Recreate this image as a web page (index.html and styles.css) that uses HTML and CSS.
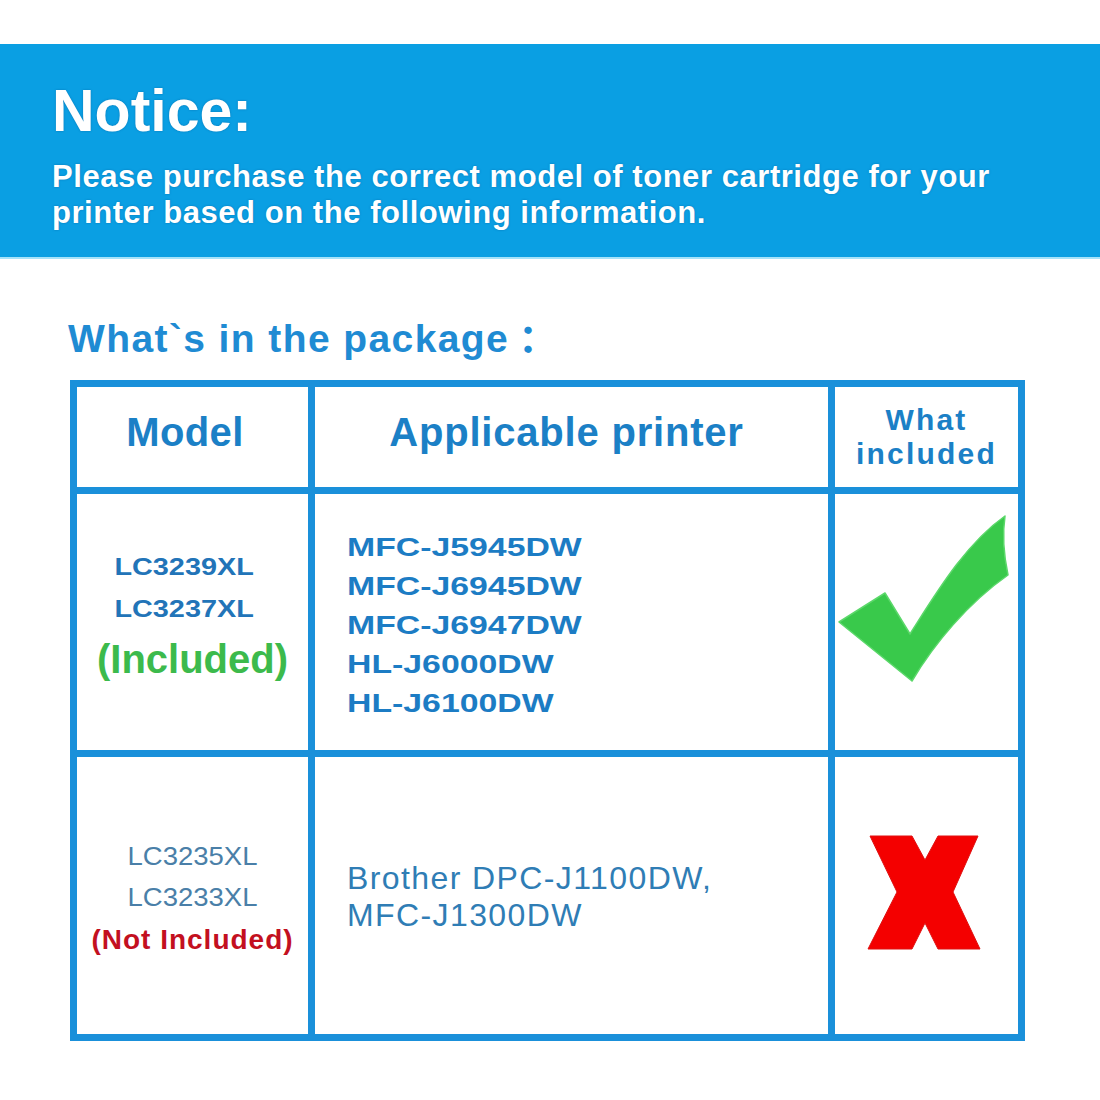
FILE: index.html
```html
<!DOCTYPE html>
<html lang="en">
<head>
<meta charset="utf-8">
<title>Notice - What's in the package</title>
<link rel="stylesheet" href="styles.css">
</head>
<body>
<div class="page">
  <section class="notice">
    <h1 class="notice-title">Notice:</h1>
    <p class="notice-text">Please purchase the correct model of toner cartridge for your<br>printer based on the following information.</p>
  </section>

  <h2 class="pkg-title">What`s in the package<span class="colon">：</span></h2>

  <div class="table">
    <div class="cell head head-model">Model</div>
    <div class="cell head head-printer">Applicable printer</div>
    <div class="cell head head-inc">What<br>included</div>

    <div class="cell models models-yes">
      <div class="lc-yes">LC3239XL</div>
      <div class="lc-yes">LC3237XL</div>
      <div class="tag-yes">(Included)</div>
    </div>
    <div class="cell printers printers-yes">
      <div class="pr-yes">MFC-J5945DW</div>
      <div class="pr-yes">MFC-J6945DW</div>
      <div class="pr-yes">MFC-J6947DW</div>
      <div class="pr-yes">HL-J6000DW</div>
      <div class="pr-yes">HL-J6100DW</div>
    </div>
    <div class="cell mark">
      <svg class="mark-svg" width="183" height="256" viewBox="0 0 183 256" aria-label="included">
        <path class="check" d="M4,128 L50,99 L75,140 C100,101 130,50 170,22 C167,42 169,62 173,81 C133,109 99,150 77,187 Z"/>
      </svg>
    </div>

    <div class="cell models models-no">
      <div class="lc-no">LC3235XL</div>
      <div class="lc-no">LC3233XL</div>
      <div class="tag-no">(Not Included)</div>
    </div>
    <div class="cell printers printers-no">
      <div class="pr-no">Brother DPC-J1100DW,</div>
      <div class="pr-no">MFC-J1300DW</div>
    </div>
    <div class="cell mark">
      <svg class="mark-svg" width="183" height="277" viewBox="0 0 183 277" aria-label="not included">
        <polygon class="cross" points="35,79 77,79 90,103 103,79 143,79 118,135 145,192 103,192 90,166 77,192 33,192 62,135"/>
      </svg>
    </div>
  </div>
</div>
</body>
</html>
```

FILE: styles.css
```css
html, body {
  margin: 0;
  padding: 0;
  background: #ffffff;
}

body {
  font-family: "Liberation Sans", Arial, "Noto Sans CJK SC", sans-serif;
}

.page {
  width: 1100px;
  height: 1100px;
  padding-top: 44px;
  box-sizing: border-box;
  overflow: hidden;
}

/* ---------- Notice band ---------- */
.notice {
  background: #0a9fe3;
  height: 215px;
  box-sizing: border-box;
  padding: 38px 0 0 52px;
  border-bottom: 2px solid #a6e3fa;
  color: #ffffff;
}

.notice-title {
  margin: 0;
  font-size: 59px;
  line-height: 59px;
  font-weight: 700;
  text-shadow: 0 0 2px rgba(0, 70, 130, 0.5);
}

.notice-text {
  margin: 18px 0 0 0;
  font-size: 31px;
  line-height: 36px;
  font-weight: 700;
  letter-spacing: 0.55px;
  white-space: nowrap;
  text-shadow: 0 0 2px rgba(0, 70, 130, 0.5);
}

/* ---------- Section title ---------- */
.pkg-title {
  margin: 57px 0 0 68px;
  font-size: 39px;
  line-height: 46px;
  font-weight: 700;
  letter-spacing: 1.4px;
  color: #1f8bd3;
  height: 46px;
}

.colon {
  letter-spacing: 0;
  margin-left: 9px;
}

/* ---------- Table ---------- */
.table {
  margin: 18px 0 0 70px;
  display: grid;
  grid-template-columns: 231px 513px 183px;
  grid-template-rows: 100px 256px 277px;
  gap: 7px;
  padding: 7px;
  background: #1a90da;
  width: max-content;
}

.cell {
  background: #ffffff;
  box-sizing: border-box;
  overflow: hidden;
}

.head {
  text-align: center;
  font-weight: 700;
  color: #1b80c6;
}

.head-model,
.head-printer {
  padding-top: 21px;
  font-size: 40px;
  line-height: 48px;
}

.head-model {
  padding-right: 15px;
  letter-spacing: 0.4px;
}

.head-printer {
  padding-right: 10px;
  letter-spacing: 0.8px;
}

.head-inc {
  padding-top: 16px;
  font-size: 30px;
  line-height: 34px;
  letter-spacing: 2.2px;
}

/* models column */
.models {
  text-align: center;
}

.models-yes {
  padding-top: 52px;
}

.lc-yes {
  font-size: 24px;
  line-height: 42px;
  font-weight: 700;
  color: #2274b8;
  padding-right: 14px;
  transform: scaleX(1.2);
}

.tag-yes {
  font-size: 40px;
  line-height: 58px;
  font-weight: 700;
  color: #3cba4c;
}

.models-no {
  padding-top: 79px;
}

.lc-no {
  font-size: 25px;
  line-height: 41px;
  font-weight: 400;
  color: #4a7fa8;
  transform: scaleX(1.1);
}

.tag-no {
  font-size: 28px;
  line-height: 43px;
  font-weight: 700;
  letter-spacing: 1px;
  color: #c3101f;
}

/* printers column */
.printers {
  padding-left: 32px;
}

.printers-yes {
  padding-top: 34px;
}

.pr-yes {
  font-size: 26px;
  line-height: 39px;
  font-weight: 700;
  color: #1c7cc4;
  transform: scaleX(1.3);
  transform-origin: left center;
}

.printers-no {
  padding-top: 103px;
}

.pr-no {
  font-size: 32px;
  line-height: 37px;
  font-weight: 400;
  letter-spacing: 1.4px;
  color: #2f7db5;
}

/* marks */
.mark-svg {
  display: block;
}

.check {
  fill: #39c94b;
  stroke: #5bd86a;
  stroke-width: 1.5;
  stroke-linejoin: round;
}

.cross {
  fill: #f40000;
  stroke: #e01010;
  stroke-width: 1;
  stroke-linejoin: miter;
}
```
